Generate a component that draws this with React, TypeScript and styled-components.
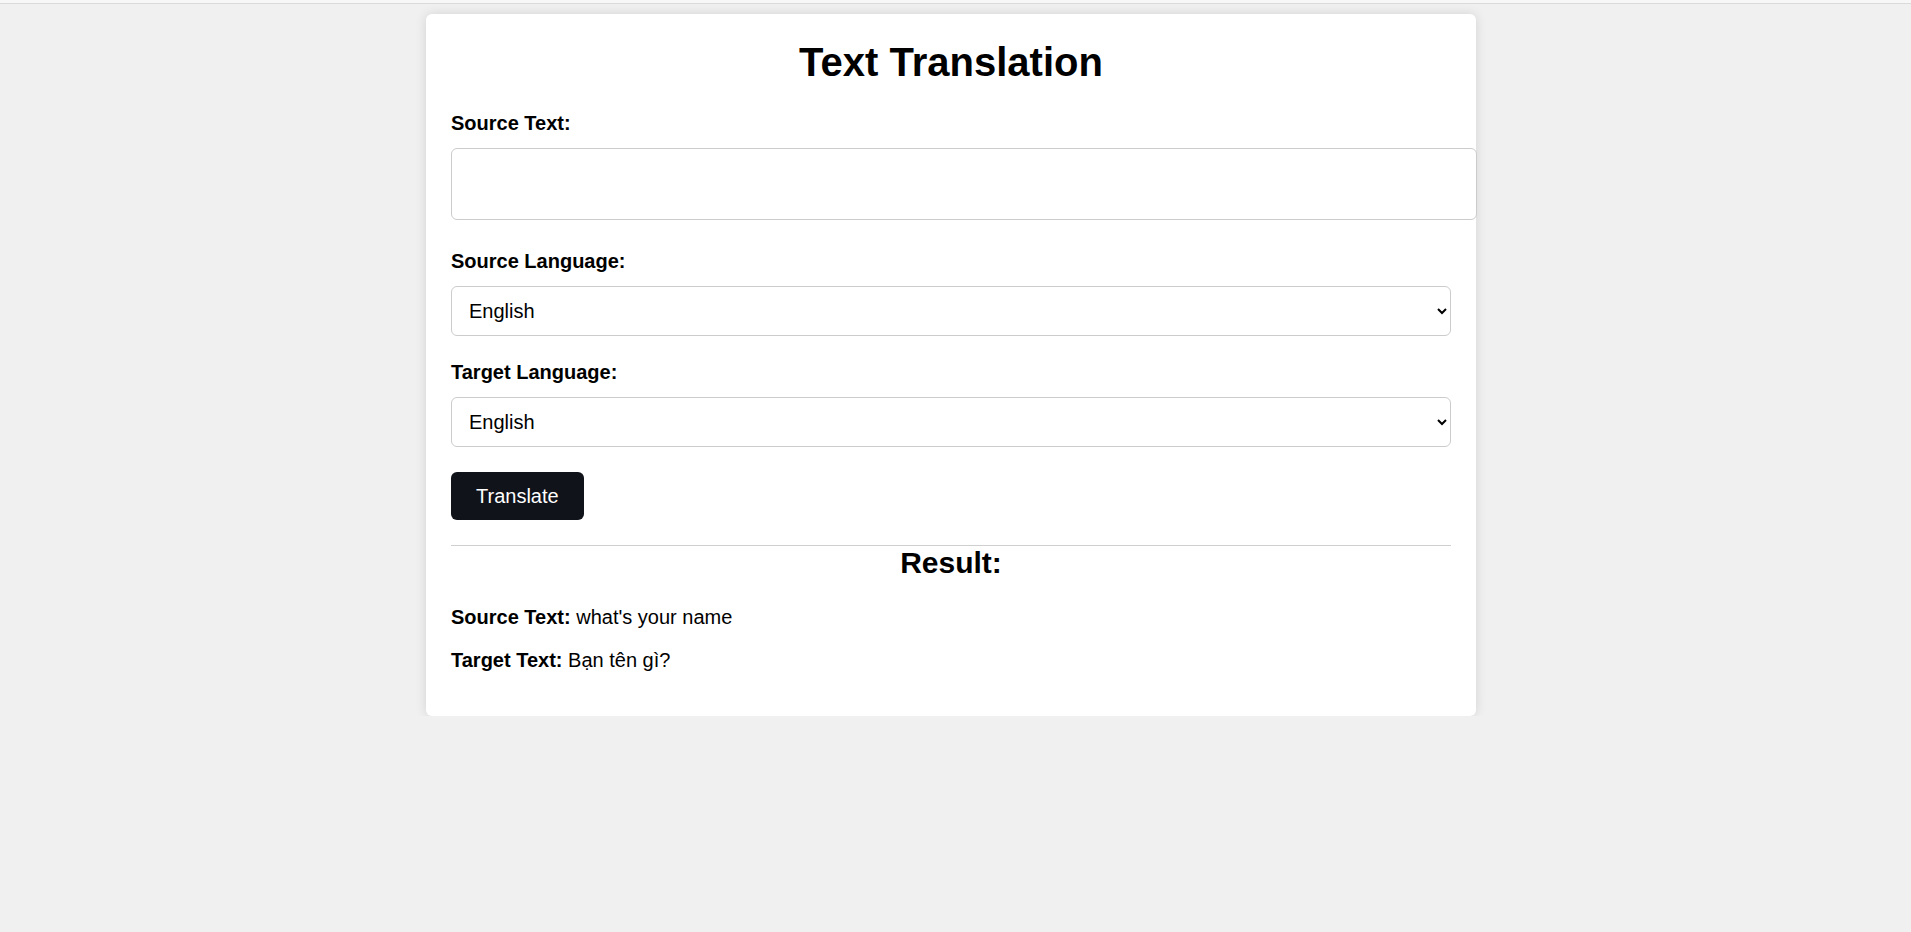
import React, { useState } from "react";
import styled, { createGlobalStyle } from "styled-components";

const GlobalStyle = createGlobalStyle`
  html, body {
    margin: 0;
    padding: 0;
  }
  body {
    background-color: #f0f0f0;
    font-family: "Liberation Sans", Arial, sans-serif;
    font-size: 20px;
    color: #000;
  }
`;

const TopEdge = styled.div`
  height: 3px;
  background-color: #f7f7f7;
  border-bottom: 1px solid #dadada;
`;

const Page = styled.div`
  display: flex;
  justify-content: center;
  padding: 10px 9px 0 0;
`;

const Card = styled.div`
  width: 1000px;
  padding: 25px;
  background-color: #fff;
  border-radius: 6px;
  box-shadow: 0 0 12px rgba(0, 0, 0, 0.12);
`;

const Title = styled.h1`
  margin: 1px 0 27px;
  font-size: 40px;
  font-weight: bold;
  text-align: center;
  line-height: normal;
`;

const Label = styled.label`
  display: block;
  margin-bottom: 13px;
  font-weight: bold;
`;

const TextArea = styled.textarea`
  display: block;
  width: 100%;
  height: 46px;
  padding: 12px;
  margin: 0 0 30px;
  border: 1px solid #ccc;
  border-radius: 6px;
  font-family: inherit;
  font-size: 20px;
  resize: none;
  outline: none;
`;

const Select = styled.select`
  display: block;
  width: 100%;
  height: 50px;
  padding: 0 13px;
  margin: 0 0 25px;
  border: 1px solid #ccc;
  border-radius: 6px;
  background-color: #fff;
  color: #000;
  font-family: inherit;
  font-size: 20px;
  outline: none;
`;

const Button = styled.button`
  display: block;
  height: 48px;
  padding: 0 25px;
  margin: 0 0 25px;
  border: none;
  border-radius: 6px;
  background-color: #10131a;
  color: #fff;
  font-family: inherit;
  font-size: 20px;
  cursor: pointer;
`;

const Divider = styled.hr`
  margin: 0;
  border: none;
  border-top: 1px solid #cfcfcf;
`;

const ResultTitle = styled.h2`
  margin: 0 0 26px;
  font-size: 30px;
  font-weight: bold;
  text-align: center;
  line-height: normal;
`;

const ResultLine = styled.p`
  margin: 0 0 20px;
  &:last-child {
    margin-bottom: 19px;
  }
`;

const languages = ["English", "Vietnamese", "French", "German", "Spanish", "Japanese"];

export default function App() {
  const [text, setText] = useState("");
  const [source, setSource] = useState("English");
  const [target, setTarget] = useState("English");

  return (
    <>
      <GlobalStyle />
      <TopEdge />
      <Page>
        <Card>
          <Title>Text Translation</Title>
          <Label htmlFor="source-text">Source Text:</Label>
          <TextArea id="source-text" value={text} onChange={(e) => setText(e.target.value)} />
          <Label htmlFor="source-lang">Source Language:</Label>
          <Select id="source-lang" value={source} onChange={(e) => setSource(e.target.value)}>
            {languages.map((l) => (
              <option key={l}>{l}</option>
            ))}
          </Select>
          <Label htmlFor="target-lang">Target Language:</Label>
          <Select id="target-lang" value={target} onChange={(e) => setTarget(e.target.value)}>
            {languages.map((l) => (
              <option key={l}>{l}</option>
            ))}
          </Select>
          <Button>Translate</Button>
          <Divider />
          <ResultTitle>Result:</ResultTitle>
          <div>
            <ResultLine>
              <strong>Source Text:</strong> what's your name
            </ResultLine>
            <ResultLine>
              <strong>Target Text:</strong> Bạn tên gì?
            </ResultLine>
          </div>
        </Card>
      </Page>
    </>
  );
}
